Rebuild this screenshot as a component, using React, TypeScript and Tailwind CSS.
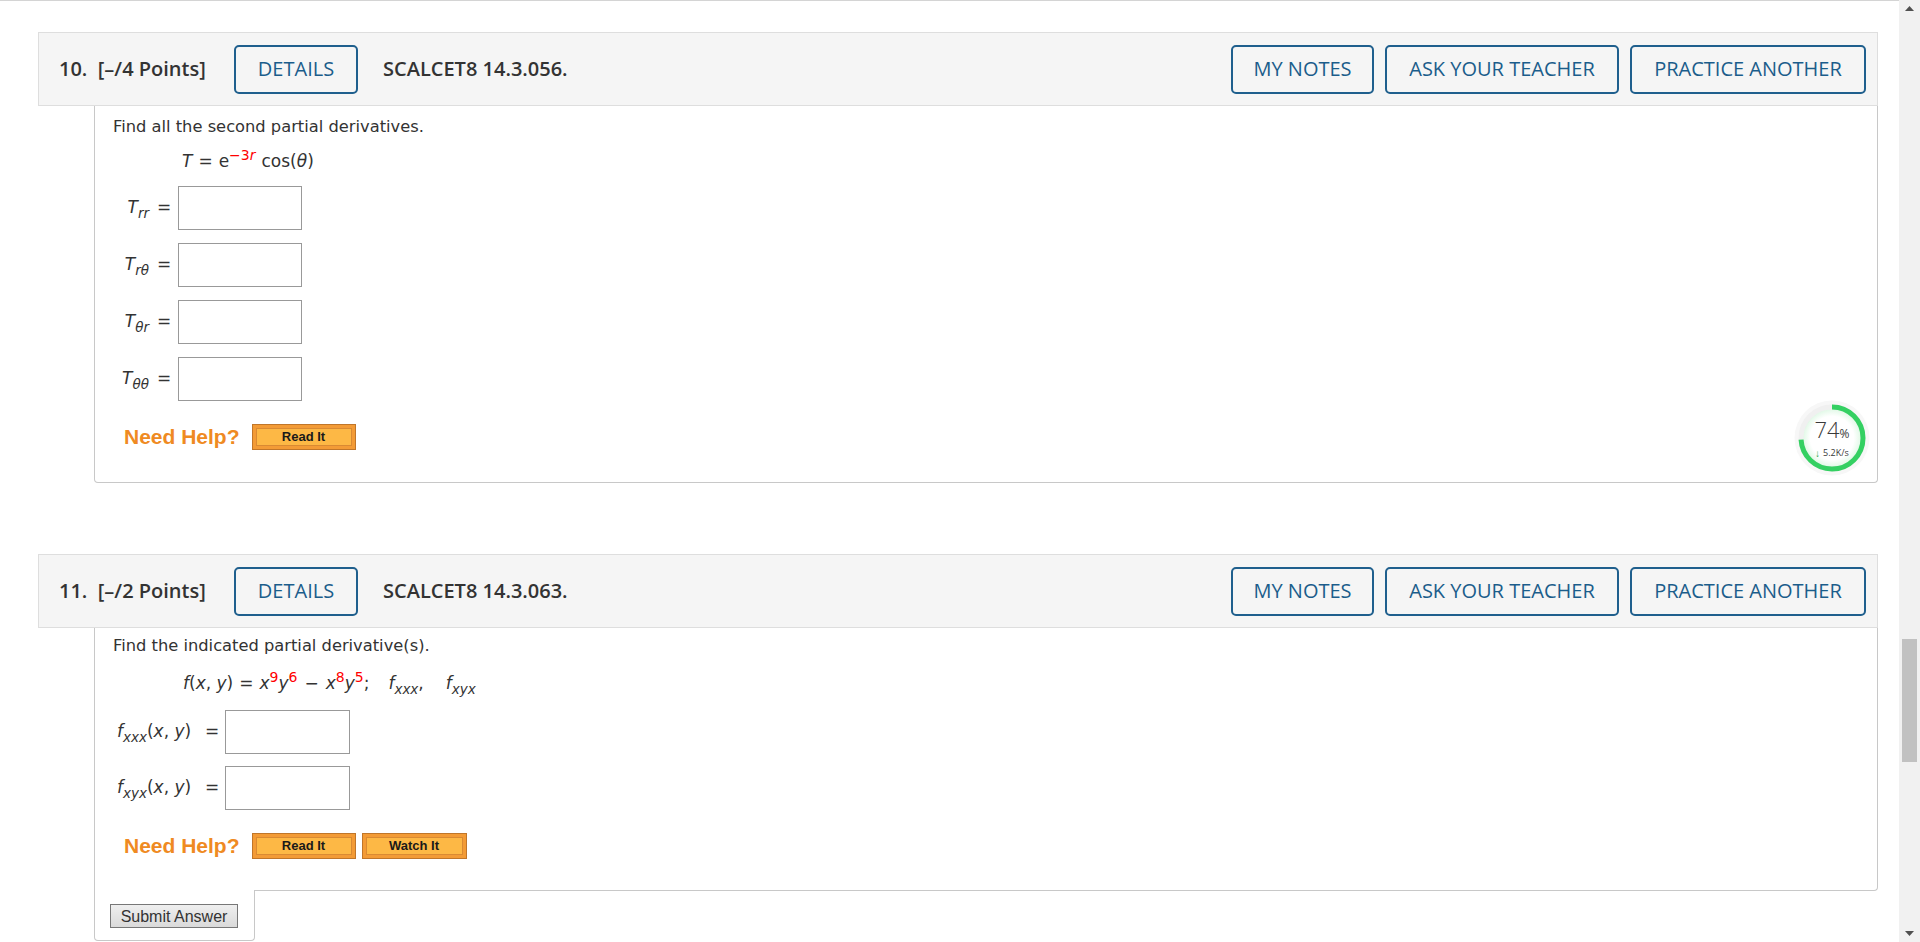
import React from 'react';

function HBtn({ children, className = '' }: { children: React.ReactNode; className?: string }) {
  return (
    <button
      className={`flex h-[49px] items-center justify-center rounded-[5px] border-2 border-[#1f5f8d] text-[20px] text-[#1b5d8b] ${className}`}
    >
      {children}
    </button>
  );
}

function QHeader({ num, pts, code }: { num: number; pts: number; code: string }) {
  return (
    <div className="flex h-[74px] items-center border border-[#dedede] bg-[#f5f5f5] pl-[20px] pr-[11px] font-['Open_Sans'] text-[20px] text-[#333]">
      <span className="w-[149px] font-semibold whitespace-pre">{`${num}.  [–/${pts} Points]`}</span>
      <HBtn className="ml-[26px] w-[124px]">DETAILS</HBtn>
      <span className="ml-[25px] font-semibold">{code}</span>
      <div className="ml-auto flex gap-[11px]">
        <HBtn className="w-[143px]">MY NOTES</HBtn>
        <HBtn className="w-[234px]">ASK YOUR TEACHER</HBtn>
        <HBtn className="w-[236px]">PRACTICE ANOTHER</HBtn>
      </div>
    </div>
  );
}

function HelpBtn({ label, w }: { label: string; w: string }) {
  return (
    <div className={`flex h-[26px] items-center border border-[#c0762a] bg-[#f39b36] p-[3px] ${w}`}>
      <div className="flex h-full w-full items-center justify-center border border-[#d98a33] bg-[#fdb845] font-['Liberation_Sans'] text-[13px] font-bold text-[#1a1a1a]">
        {label}
      </div>
    </div>
  );
}

function NeedHelp({ watch }: { watch?: boolean }) {
  return (
    <div className="ml-[11px] flex items-center">
      <span className="font-['Liberation_Sans'] text-[21px] font-bold text-[#ef8a22]">Need Help?</span>
      <div className="ml-[12px] flex gap-[6px]">
        <HelpBtn label="Read It" w="w-[104px]" />
        {watch && <HelpBtn label="Watch It" w="w-[105px]" />}
      </div>
    </div>
  );
}

function Sub({ children }: { children: React.ReactNode }) {
  return <span className="relative top-[5px] text-[13.5px] italic">{children}</span>;
}

function Sup({ children }: { children: React.ReactNode }) {
  return <sup className="text-[14px] text-[#f00]">{children}</sup>;
}

function Box() {
  return <div className="h-[44px] w-[124px] border border-[#999] bg-white" />;
}

function TRow({ a, b }: { a: string; b: string }) {
  return (
    <div className="flex items-center text-[17px]">
      <span className="w-[36px] text-right whitespace-nowrap">
        <i>T</i>
        <Sub>
          {a}
          {b}
        </Sub>
      </span>
      <span className="ml-[8px] w-[21px]">=</span>
      <Box />
    </div>
  );
}

function FRow({ s }: { s: string }) {
  return (
    <div className="flex items-center text-[17px]">
      <span className="ml-[4px] w-[76px] whitespace-nowrap">
        <i>f</i>
        <Sub>{s}</Sub>(<i>x</i>, <i>y</i>)
      </span>
      <span className="ml-[12px] w-[20px]">=</span>
      <div className="h-[44px] w-[125px] border border-[#999] bg-white" />
    </div>
  );
}

export default function App() {
  return (
    <div className="flex h-[942px] w-[1920px] overflow-hidden bg-white">
      <main className="relative flex-1 border-t border-[#d4d4d4] pl-[38px] pr-[21px] pt-[31px] font-['DejaVu_Sans'] text-[16.3px] text-[#333]">
        {/* Question 10 */}
        <QHeader num={10} pts={4} code="SCALCET8 14.3.056." />
        <div className="ml-[56px] h-[377px] rounded-b-[4px] border-x border-b border-[#c8c8c8] pl-[18px] pt-[11px]">
          <p className="leading-[20px]">Find all the second partial derivatives.</p>
          <p className="mt-[14px] ml-[69px] text-[17px] leading-[20px]">
            <i>T</i>
            <span className="mx-[6px]">=</span>e<Sup>−3<i>r</i></Sup>
            <span className="ml-[6px]">cos(</span>
            <i>θ</i>)
          </p>
          <div className="mt-[15px] flex flex-col gap-[13px]">
            <TRow a="r" b="r" />
            <TRow a="r" b="θ" />
            <TRow a="θ" b="r" />
            <TRow a="θ" b="θ" />
          </div>
          <div className="mt-[20px]">
            <NeedHelp />
          </div>
        </div>

        {/* network speed widget */}
        <div className="absolute left-[1794px] top-[399px] h-[76px] w-[76px]">
          <svg width="76" height="76" viewBox="0 0 76 76">
            <defs>
              <radialGradient id="glow" cx="50%" cy="50%" r="50%">
                <stop offset="70%" stopColor="#ffffff" />
                <stop offset="100%" stopColor="#d9f7e0" />
              </radialGradient>
            </defs>
            <circle cx="38" cy="38" r="37.5" fill="#f7f7f7" />
            <circle cx="38" cy="38" r="31" fill="url(#glow)" stroke="#f0f0f0" strokeWidth="5" />
            <circle
              cx="38"
              cy="38"
              r="31"
              fill="none"
              stroke="#34d062"
              strokeWidth="5"
              strokeDasharray={`${0.74 * 2 * Math.PI * 31} 400`}
              transform="rotate(-90 38 38)"
            />
          </svg>
          <div className="absolute inset-0 flex flex-col items-center justify-center font-['Open_Sans'] text-[#3a3a3a]">
            <div className="mt-[-2px] leading-[26px]">
              <span className="text-[22px] font-light">74</span>
              <span className="text-[12px]">%</span>
            </div>
            <div className="flex items-center gap-[3px] text-[9px] leading-[12px]">
              <span className="text-[10px] font-bold text-[#27a845]">↓</span>5.2K/s
            </div>
          </div>
        </div>

        {/* Question 11 */}
        <div className="mt-[71px]">
          <QHeader num={11} pts={2} code="SCALCET8 14.3.063." />
        </div>
        <div className="ml-[56px] h-[263px] rounded-br-[4px] border-x border-b border-[#c8c8c8] pl-[18px] pt-[8px]">
          <p className="leading-[20px]">Find the indicated partial derivative(s).</p>
          <p className="mt-[17px] ml-[70px] text-[17px] leading-[20px] whitespace-pre">
            <i>f</i>(<i>x</i>, <i>y</i>)<span className="mx-[6px]">=</span>
            <i>x</i>
            <Sup>9</Sup>
            <i>y</i>
            <Sup>6</Sup>
            <span className="mx-[7px]">−</span>
            <i>x</i>
            <Sup>8</Sup>
            <i>y</i>
            <Sup>5</Sup>;<span className="ml-[19px]" />
            <i>f</i>
            <Sub>xxx</Sub>,<span className="ml-[22px]" />
            <i>f</i>
            <Sub>xyx</Sub>
          </p>
          <div className="mt-[16px] flex flex-col gap-[12px]">
            <FRow s="xxx" />
            <FRow s="xyx" />
          </div>
          <div className="mt-[20px]">
            <NeedHelp watch />
          </div>
        </div>
        <div className="relative -mt-px ml-[56px] h-[51px] w-[161px] rounded-b-[4px] border-x border-b border-[#c8c8c8] bg-white pl-[15px] pt-[14px]">
          <button className="h-[24px] w-[128px] border border-[#777] bg-gradient-to-b from-[#efefef] to-[#dadada] font-['Liberation_Sans'] text-[16px] text-[#333]">
            Submit Answer
          </button>
        </div>
      </main>

      {/* scrollbar */}
      <div className="flex w-[21px] flex-col bg-[#f1f1f1]">
        <div className="flex h-[17px] items-center justify-center">
          <svg width="9" height="5" viewBox="0 0 9 5">
            <path d="M0 5 L4.5 0 L9 5 Z" fill="#505050" />
          </svg>
        </div>
        <div className="h-[622px]" />
        <div className="mx-[3px] h-[123px] bg-[#c1c1c1]" />
        <div className="flex-1" />
        <div className="flex h-[17px] items-center justify-center">
          <svg width="9" height="5" viewBox="0 0 9 5">
            <path d="M0 0 L4.5 5 L9 0 Z" fill="#505050" />
          </svg>
        </div>
      </div>
    </div>
  );
}
